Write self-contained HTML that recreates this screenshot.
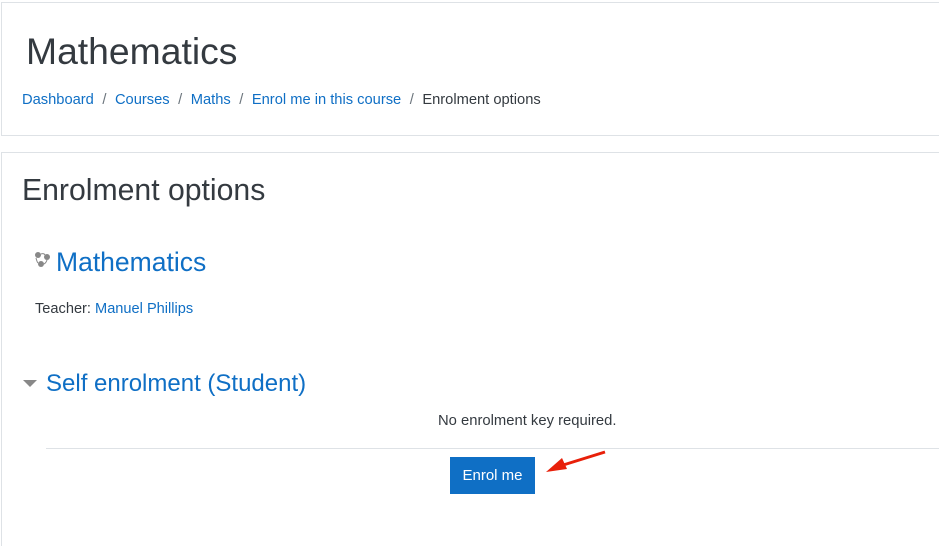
<!DOCTYPE html>
<html style="margin:0;height:546px;overflow:hidden"><head><meta charset="utf-8"><style>
body{margin:0;background:#fff;font-family:"Liberation Sans",sans-serif;color:#343a40;width:939px;height:546px;overflow:hidden;position:relative}
a{color:#0f6fc5;text-decoration:none}
.box{position:absolute;left:1px;width:960px;border:1px solid #dee2e6;box-sizing:border-box;background:#fff}
.abs{position:absolute;white-space:nowrap}
</style></head><body>
<div class="box" style="top:2px;height:134px"></div>
<div class="box" style="top:152px;height:400px"></div>
<div class="abs" style="left:26px;top:29px;font-size:37.3px;line-height:44px">Mathematics</div>
<div class="abs" style="left:22px;top:91px;font-size:14.7px;line-height:18px"><a>Dashboard</a><span style="color:#6c757d;padding:0 8.5px">/</span><a>Courses</a><span style="color:#6c757d;padding:0 8.5px">/</span><a>Maths</a><span style="color:#6c757d;padding:0 8.5px">/</span><a>Enrol me in this course</a><span style="color:#6c757d;padding:0 8.5px">/</span>Enrolment options</div>
<div class="abs" style="left:22px;top:173px;font-size:30.2px;line-height:36px">Enrolment options</div>
<svg class="abs" style="left:34px;top:250px" width="18" height="18" viewBox="0 0 18 18"><g fill="#888"><circle cx="4" cy="5" r="3"/><circle cx="13" cy="7" r="3"/><circle cx="7" cy="14" r="3"/></g><g stroke="#888" stroke-width="1" fill="none"><path d="M7 4 Q10 3 11 5"/><path d="M2 8 Q3 12 4 13"/><path d="M13 10 Q12 13 10 14"/></g></svg>
<div class="abs" style="left:56px;top:246px;font-size:26.5px;line-height:32px;color:#0f6fc5">Mathematics</div>
<div class="abs" style="left:35px;top:300px;font-size:14.6px;line-height:18px">Teacher: <a>Manuel Phillips</a></div>
<svg class="abs" style="left:23px;top:380px" width="14" height="8"><path d="M0 0H14L7 7Z" fill="#888"/></svg>
<div class="abs" style="left:46px;top:369px;font-size:24px;line-height:30px;color:#0f6fc5">Self enrolment (Student)</div>
<div class="abs" style="left:438px;top:412px;font-size:14.8px;line-height:18px">No enrolment key required.</div>
<div class="abs" style="left:46px;top:448px;width:900px;height:1px;background:#dee2e6"></div>
<div class="abs" style="left:450px;top:457px;width:85px;height:37px;background:#0f6fc5;color:#fff;font-size:15px;line-height:37px;text-align:center">Enrol me</div>
<svg class="abs" style="left:540px;top:448px" width="70" height="30"><path d="M65 4 L20 18" stroke="#e8200a" stroke-width="3"/><path d="M6 24 L22 10 L27 21 Z" fill="#e8200a"/></svg>
</body></html>
